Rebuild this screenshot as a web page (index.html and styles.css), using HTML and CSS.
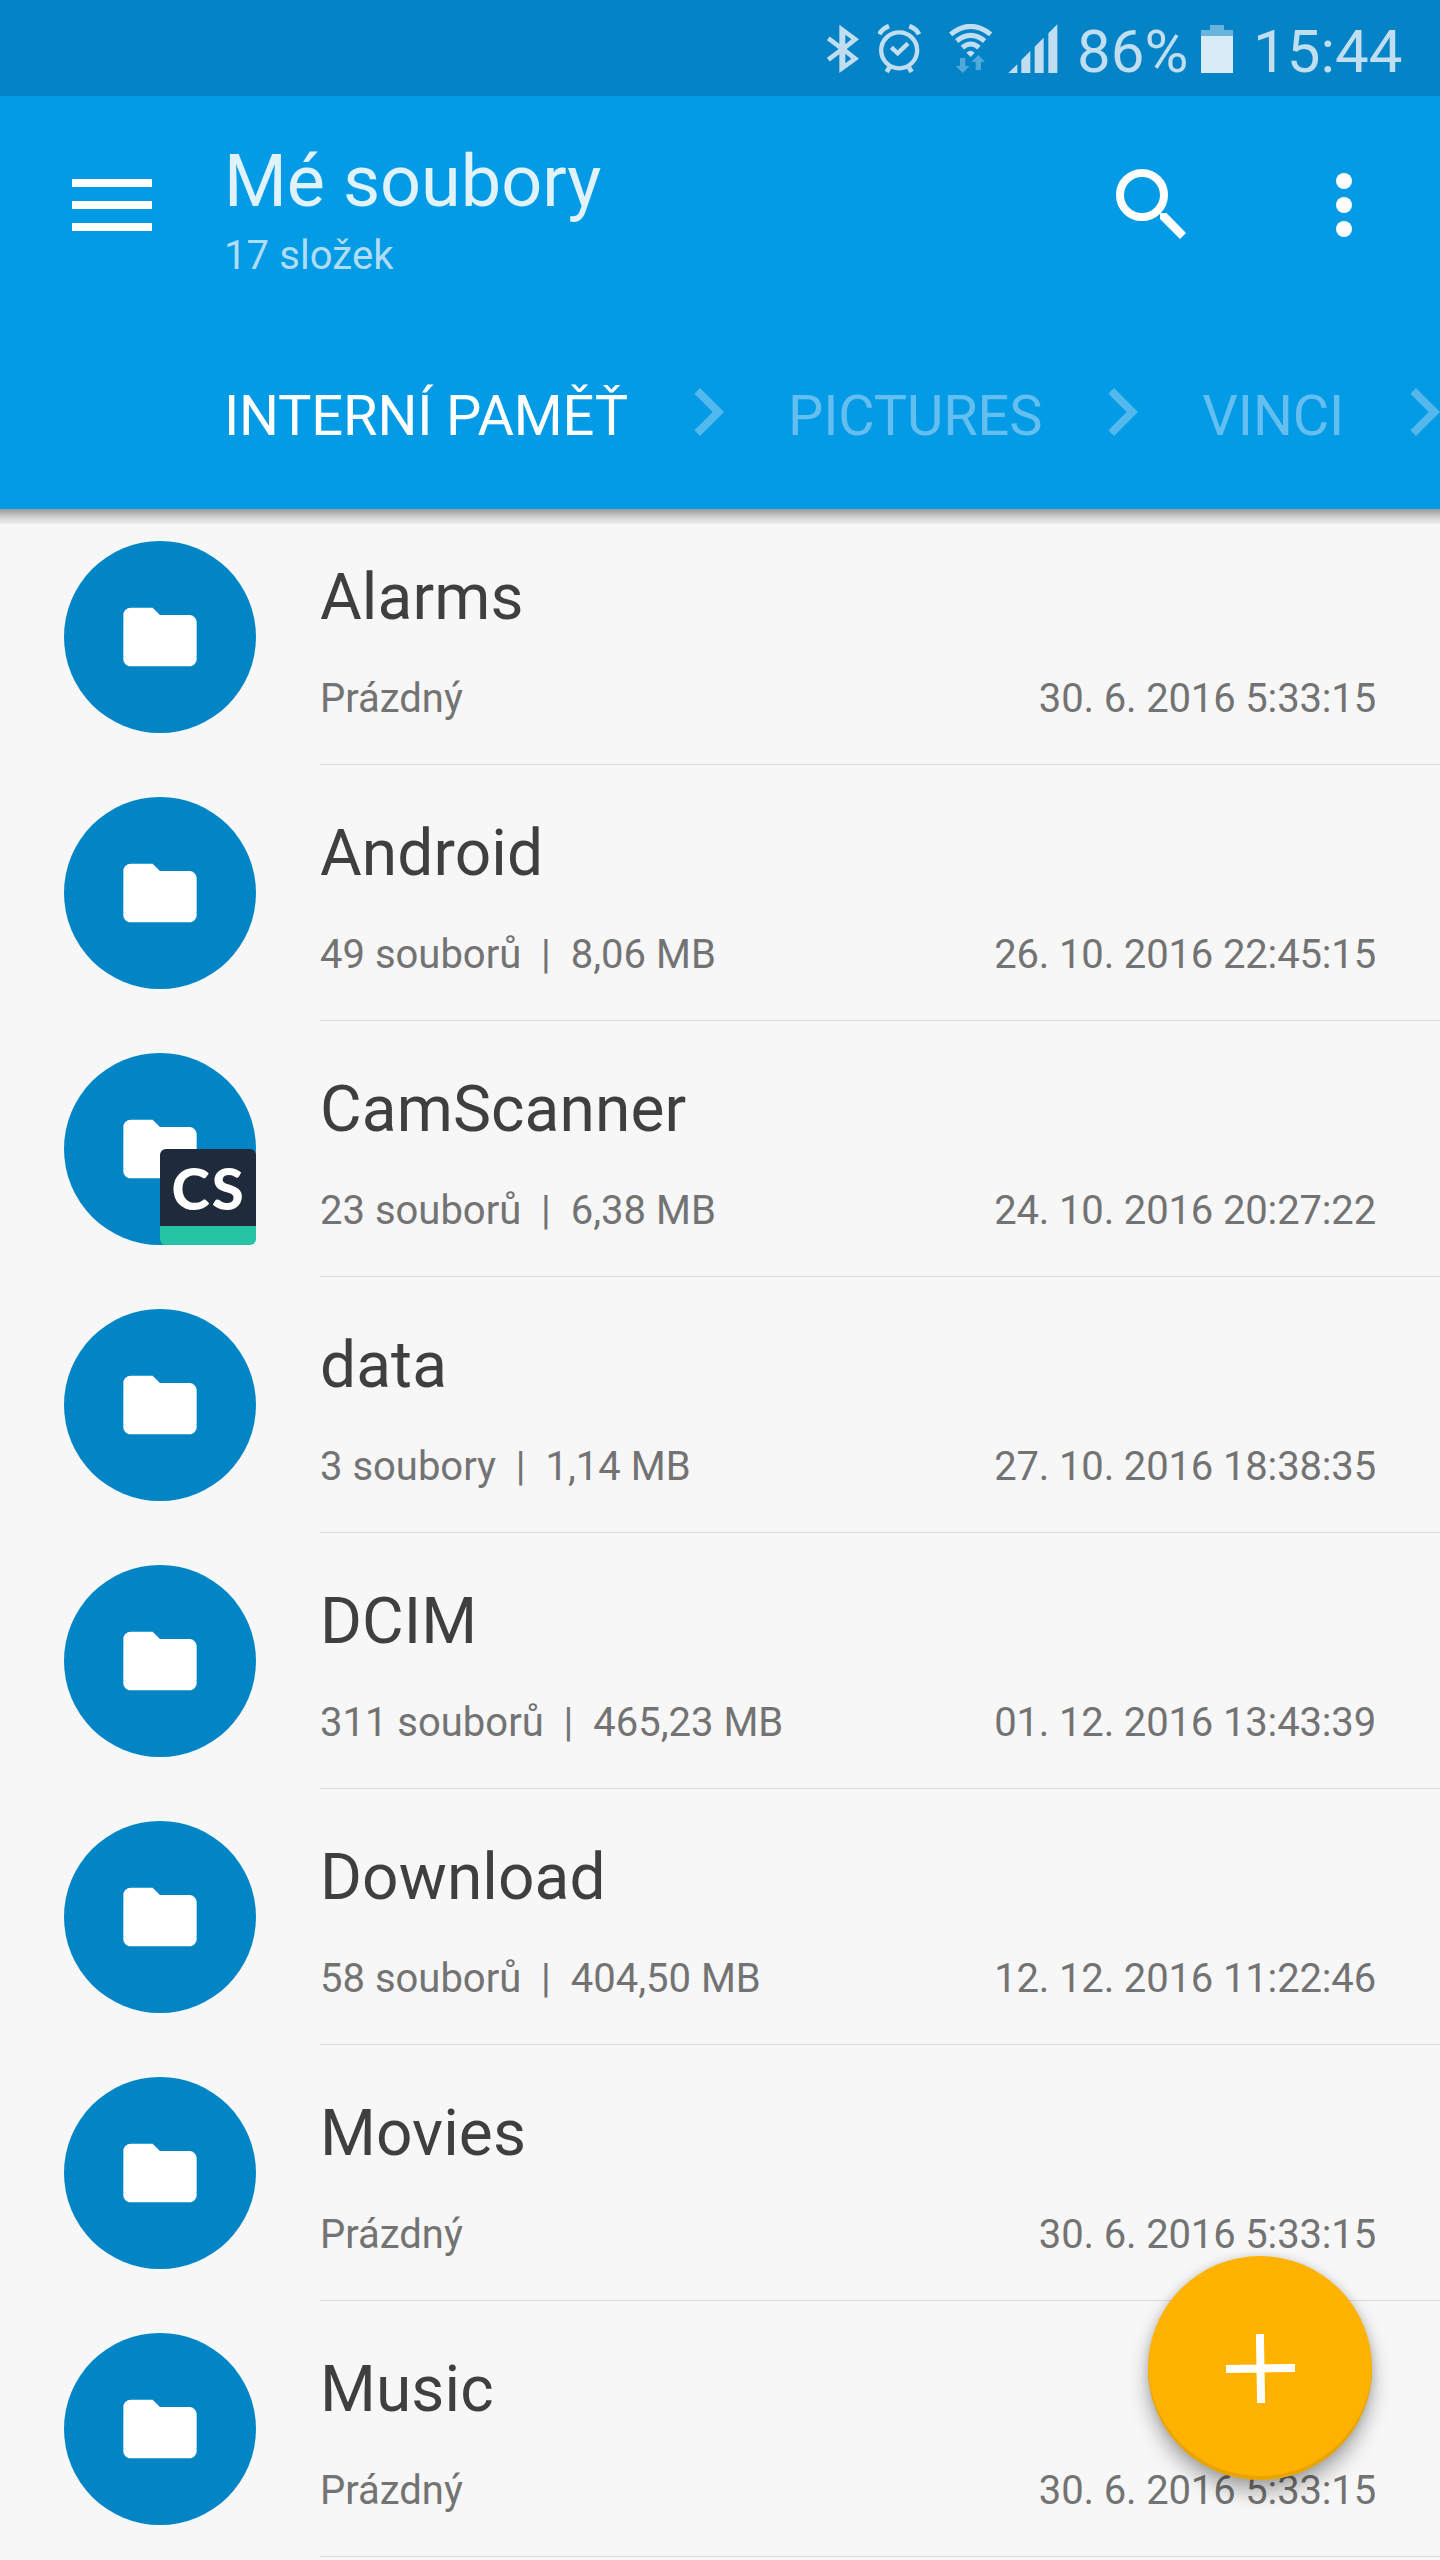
FILE: index.html
```html
<!DOCTYPE html>
<html lang="cs">
  <head>
    <meta charset="UTF-8" />
    <meta name="viewport" content="width=device-width, initial-scale=1.0" />
    <title>Mé soubory</title>
    <link rel="stylesheet" href="styles.css">
  </head>
  <body>
    <svg class="symbols">
      <symbol id="folder" viewBox="0 0 24 24">
        <path d="M10 4H4c-1.1 0-1.99.9-1.99 2L2 18c0 1.1.9 2 2 2h16c1.1 0 2-.9 2-2V8c0-1.1-.9-2-2-2h-8l-2-2z" />
      </symbol>
      <symbol id="chevron" viewBox="0 0 24 24">
        <path d="M10 6L8.59 7.41 13.17 12l-4.58 4.59L10 18l6-6z" />
      </symbol>
    </svg>

    <div class="status-bar">
      <svg class="bluetooth" width="32" height="49" viewBox="80 72 96 147">
        <path d="M84 115L126 147 84 179" fill="none" stroke="currentColor" stroke-width="14" />
        <path fill-rule="evenodd" d="M117 74L176 118 139 147 176 176 117 219zM135 104V133L153 118zM135 161V190L153 176z" />
      </svg>
      <svg class="alarm" width="43" height="49" viewBox="235 72 129 147">
        <g fill="none" stroke="currentColor">
          <circle cx="298.500" cy="151" r="54" stroke-width="13" />
          <path d="M275 142L294 160 325 130" stroke-width="13" />
          <path d="M239 103Q246 87 268 78M358 103Q351 87 329 78" stroke-width="14" />
          <path d="M270 201L261 216M327 201L336 216" stroke-width="14" />
        </g>
      </svg>
      <svg class="wifi" width="43" height="49" viewBox="447 72 129 147">
        <g fill="none" stroke="currentColor" stroke-width="15">
          <path d="M452 103Q512 55 572 103" />
          <path d="M470 123Q512 89 554 123" />
          <path d="M487 143Q512 121 537 143" />
        </g>
        <path d="M499 158Q512 146 524 158L512 171z" />
        <path class="dim" d="M480 174H496V198H509L488 219 467 198H480zM527 210V186H514L535 165 555 186H543V210z" />
      </svg>
      <svg class="signal" width="50" height="49" viewBox="623 72 150 147">
        <path d="M624 219L651 193V219zM663 219V180L690 153V219zM703 219V140L730 113V219zM744 219V100L771 73V219z" />
      </svg>
      <span class="percent">86%</span>
      <svg class="battery" width="32" height="49" viewBox="0 0 32 49">
        <path class="empty" d="M0 6H9V1H23V6H32V12H0z" />
        <path class="full" d="M0 12H32V49H0z" />
      </svg>
      <span class="clock">15:44</span>
    </div>

    <header class="app-bar">
      <div class="toolbar">
        <div class="menu-icon">
          <i></i>
          <i></i>
          <i></i>
        </div>
        <div class="heading">
          <h1>Mé soubory</h1>
          <p>17 složek</p>
        </div>
        <svg class="search-icon" width="96" height="96" viewBox="0 0 96 96">
          <circle cx="38" cy="38" r="22" />
          <path d="M56 56h6.500L82 76 76 82 56 62z" />
        </svg>
        <svg class="more-icon" width="16" height="64" viewBox="0 0 16 64">
          <circle cx="8" cy="8" r="8" />
          <circle cx="8" cy="32" r="8" />
          <circle cx="8" cy="56" r="8" />
        </svg>
      </div>
      <nav class="breadcrumbs">
        <span class="active">INTERNÍ PAMĚŤ</span>
        <svg><use href="#chevron" /></svg>
        <span>PICTURES</span>
        <svg><use href="#chevron" /></svg>
        <span>VINCI</span>
        <svg><use href="#chevron" /></svg>
      </nav>
    </header>

    <ul class="files">
      <li>
        <div class="avatar"><svg><use href="#folder" /></svg></div>
        <div class="info">
          <h2>Alarms</h2>
          <p><span>Prázdný</span><span class="date">30. 6. 2016 5:33:15</span></p>
        </div>
      </li>
      <li>
        <div class="avatar"><svg><use href="#folder" /></svg></div>
        <div class="info">
          <h2>Android</h2>
          <p><span>49 souborů&nbsp; |&nbsp; 8,06 MB</span><span class="date">26. 10. 2016 22:45:15</span></p>
        </div>
      </li>
      <li>
        <div class="avatar">
          <svg><use href="#folder" /></svg>
          <div class="badge">CS</div>
        </div>
        <div class="info">
          <h2>CamScanner</h2>
          <p><span>23 souborů&nbsp; |&nbsp; 6,38 MB</span><span class="date">24. 10. 2016 20:27:22</span></p>
        </div>
      </li>
      <li>
        <div class="avatar"><svg><use href="#folder" /></svg></div>
        <div class="info">
          <h2>data</h2>
          <p><span>3 soubory&nbsp; |&nbsp; 1,14 MB</span><span class="date">27. 10. 2016 18:38:35</span></p>
        </div>
      </li>
      <li>
        <div class="avatar"><svg><use href="#folder" /></svg></div>
        <div class="info">
          <h2>DCIM</h2>
          <p><span>311 souborů&nbsp; |&nbsp; 465,23 MB</span><span class="date">01. 12. 2016 13:43:39</span></p>
        </div>
      </li>
      <li>
        <div class="avatar"><svg><use href="#folder" /></svg></div>
        <div class="info">
          <h2>Download</h2>
          <p><span>58 souborů&nbsp; |&nbsp; 404,50 MB</span><span class="date">12. 12. 2016 11:22:46</span></p>
        </div>
      </li>
      <li>
        <div class="avatar"><svg><use href="#folder" /></svg></div>
        <div class="info">
          <h2>Movies</h2>
          <p><span>Prázdný</span><span class="date">30. 6. 2016 5:33:15</span></p>
        </div>
      </li>
      <li>
        <div class="avatar"><svg><use href="#folder" /></svg></div>
        <div class="info">
          <h2>Music</h2>
          <p><span>Prázdný</span><span class="date">30. 6. 2016 5:33:15</span></p>
        </div>
      </li>
    </ul>

    <button class="fab" aria-label="Přidat">
      <svg width="70" height="70" viewBox="0 0 70 70">
        <path d="M35.500 1V70M1 35.500H70" transform="rotate(-1 35 35)" />
      </svg>
    </button>
  </body>
</html>
```
FILE: styles.css
```css
* {
  box-sizing: border-box;
}

body {
  position: relative;
  margin: 0;
  height: 2560px;
  overflow: hidden;
  font-family: Roboto, sans-serif;
  background-color: #f7f7f7;
  color: #3f3f3f;
}

h1,
h2,
p,
ul {
  margin: 0;
  padding: 0;
  font-weight: normal;
}

svg {
  display: block;
  flex: none;
  fill: currentColor;
}

.symbols {
  display: none;
}

/* status bar */
.status-bar {
  display: flex;
  justify-content: flex-end;
  height: 96px;
  padding: 24px 33px 0 0;
  background-color: #0484c6;
  color: #c0def0;
  font-size: 60px;
  line-height: 56px;
}

.alarm {
  margin-left: 19px;
}

.wifi {
  margin-left: 28px;
}

.wifi .dim {
  fill: #4fa9d9;
}

.signal {
  margin-left: 16px;
}

.percent {
  width: 124px;
  margin-left: 19px;
}

.battery .empty {
  fill: #68b4dc;
}

.battery .full {
  fill: #d9ebf6;
}

.clock {
  width: 154px;
  margin-left: 20px;
}

/* app bar */
.app-bar {
  position: relative;
  height: 413px;
  background-color: #039be5;
  color: #fff;
}

.app-bar::after {
  content: '';
  position: absolute;
  top: 100%;
  left: 0;
  width: 100%;
  height: 15px;
  background: linear-gradient(rgba(0, 0, 0, 0.38), rgba(0, 0, 0, 0.17) 50%, rgba(0, 0, 0, 0.03));
}

.toolbar {
  display: flex;
  align-items: center;
  height: 218px;
  padding: 0 88px 0 72px;
}

.menu-icon {
  display: flex;
  flex-direction: column;
  gap: 14px;
  width: 80px;
}

.menu-icon i {
  height: 8px;
  background-color: #fff;
}

.heading {
  flex: 1;
  align-self: flex-start;
  padding: 44px 0 0 72px;
}

.heading h1 {
  font-size: 72px;
  line-height: 84px;
  color: #e0f2fc;
}

.heading p {
  margin-top: 8px;
  font-size: 40px;
  line-height: 47px;
  letter-spacing: 0.1px;
  color: #afddf6;
}

.search-icon {
  margin-right: 136px;
}

.search-icon circle {
  fill: none;
  stroke: #fff;
  stroke-width: 8;
}

.breadcrumbs {
  display: flex;
  gap: 32px;
  padding: 69px 0 0 224px;
  overflow: hidden;
  font-size: 56px;
  line-height: 66px;
  letter-spacing: -0.15px;
  white-space: nowrap;
  color: #64bef0;
}

.breadcrumbs .active {
  color: #fff;
}

.breadcrumbs svg {
  width: 96px;
  height: 96px;
  margin-top: -19px;
  color: #52b8ed;
}

/* file list */
.files {
  list-style: none;
}

.files li {
  display: flex;
  height: 256px;
  padding-left: 64px;
}

.avatar {
  position: relative;
  display: flex;
  align-items: center;
  justify-content: center;
  width: 192px;
  height: 192px;
  margin: 32px 64px 0 0;
  border-radius: 50%;
  background-color: #0285c5;
  color: #fff;
}

.avatar svg {
  width: 88px;
  height: 88px;
}

.badge {
  position: absolute;
  right: 0;
  bottom: 0;
  width: 96px;
  height: 96px;
  border-radius: 6px;
  background: linear-gradient(#1f2a3a 77px, #26c4a4 77px);
  font: 900 58px/77px Lato, sans-serif;
  letter-spacing: 2px;
  text-indent: 1px;
  text-align: center;
}

.info {
  flex: 1;
  padding: 51px 64px 0 0;
  border-bottom: 1px solid #dadada;
}

.info h2 {
  font-size: 64px;
  line-height: 75px;
  letter-spacing: 0.1px;
}

.info p {
  display: flex;
  justify-content: space-between;
  margin-top: 40px;
  font-size: 40px;
  line-height: 47px;
  color: #737373;
}

.info .date {
  letter-spacing: -0.15px;
}

.fab {
  position: absolute;
  right: 68px;
  bottom: 80px;
  display: flex;
  align-items: center;
  justify-content: center;
  width: 224px;
  height: 224px;
  padding: 0;
  border: none;
  border-radius: 50%;
  background-color: #ffb300;
  box-shadow: inset 0 -4px 0 #e8a502, 0 12px 20px rgba(0, 0, 0, 0.32), 0 0 8px rgba(0, 0, 0, 0.12);
}

.fab path {
  stroke: #fff;
  stroke-width: 8;
}
```
